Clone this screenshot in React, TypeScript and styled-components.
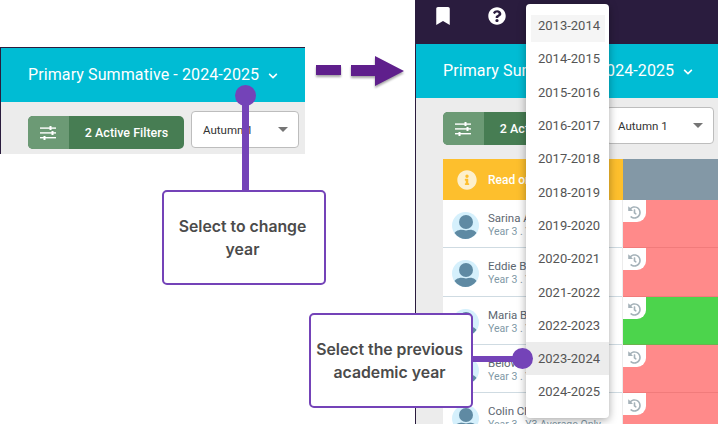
import React from 'react';
import styled, { createGlobalStyle } from 'styled-components';
import { FaBookmark, FaQuestionCircle, FaInfoCircle, FaHistory, FaChevronDown } from 'react-icons/fa';

const GlobalStyle = createGlobalStyle`
    html, body {
        margin: 0;
        padding: 0;
        background: #fff;
    }
    body {
        font-family: Roboto, "Liberation Sans", sans-serif;
    }
`;

const PURPLE = '#7443b8';

const Canvas = styled.div`
    position: relative;
    display: flex;
    width: 718px;
    height: 424px;
    overflow: hidden;
    background: #fff;
`;

const LeftColumn = styled.div`
    width: 415px;
    flex: none;
    padding-top: 47px;
    box-sizing: border-box;
`;

const LeftShot = styled.div`
    width: 305px;
    box-sizing: border-box;
    border-top: 1px solid #2a1c3e;
    border-left: 1px solid #2a1c3e;
`;

const RightShot = styled.div`
    flex: 1;
    min-width: 0;
    height: 424px;
    border-left: 1px solid #2a1c3e;
    background: #ececec;
`;

const NavBar = styled.div`
    height: 44px;
    background: #2a1c3e;
    display: flex;
    align-items: flex-start;
    color: #fff;
    padding: 7px 0 0 18px;
    box-sizing: border-box;
    gap: 36px;
`;

const TitleBar = styled.div`
    height: 54px;
    background: #00bcd4;
    display: flex;
    align-items: center;
    padding-left: 27px;
    color: #fff;
    font-size: 16px;
    letter-spacing: 0.1px;
    white-space: nowrap;
    padding-bottom: 2px;
    box-sizing: border-box;
`;

const Chevron = styled(FaChevronDown)`
    width: 10px;
    height: 10px;
    margin-left: 9px;
    margin-top: 3px;
`;

const FilterBar = styled.div`
    height: 52px;
    background: #ececec;
    display: flex;
    align-items: flex-start;
    gap: 7px;
    padding-left: 27px;
    box-sizing: border-box;
`;

const FilterButton = styled.div`
    margin-top: 14px;
    width: 156px;
    height: 33px;
    display: flex;
    flex: none;
    border-radius: 5px;
    overflow: hidden;
    background: #477d53;
    color: #fff;
    font-size: 12.5px;
    font-weight: 500;
`;

const FilterIcon = styled.div`
    width: 41px;
    background: #6c9a75;
    display: flex;
    align-items: center;
    justify-content: center;
`;

const FilterLabel = styled.div`
    flex: 1;
    display: flex;
    align-items: center;
    justify-content: center;
    white-space: nowrap;
`;

const SelectBox = styled.div`
    margin-top: 9px;
    width: 108px;
    height: 37px;
    flex: none;
    background: #fff;
    border: 1px solid #bdbdbd;
    border-radius: 4px;
    box-sizing: border-box;
    display: flex;
    align-items: center;
    justify-content: space-between;
    padding: 0 10px 0 11px;
    font-size: 11.5px;
    color: #333;
`;

const Caret = styled.div`
    width: 0;
    height: 0;
    border-left: 5px solid transparent;
    border-right: 5px solid transparent;
    border-top: 5px solid #757575;
`;

const Table = styled.div`
    margin: 9px 0 0 27px;
`;

const TableHead = styled.div`
    display: flex;
    height: 41px;
`;

const ReadOnly = styled.div`
    width: 180px;
    background: #fdbf2d;
    display: flex;
    align-items: center;
    gap: 11px;
    padding-left: 14px;
    box-sizing: border-box;
    color: #fff;
    font-size: 12px;
    font-weight: 500;
    svg {
        width: 20px;
        height: 20px;
        color: #fdf0cc;
    }
`;

const HeadFill = styled.div`
    flex: 1;
    background: #8398a6;
`;

const Row = styled.div`
    display: flex;
    height: 48.25px;
`;

const PupilCell = styled.div`
    width: 179px;
    flex: none;
    box-sizing: border-box;
    background: #fff;
    border-bottom: 1px solid #cfdbe2;
    display: flex;
    align-items: flex-start;
    padding: 10px 0 0 9px;
    gap: 9px;
    margin-right: 1px;
`;

const AvatarGlyph = styled.svg`
    flex: none;
    margin-top: 2px;
`;

const PupilText = styled.div`
    white-space: nowrap;
    padding-top: 1px;
`;

const PupilName = styled.div`
    font-size: 11.5px;
    line-height: 14px;
    color: #5c6670;
`;

const PupilMeta = styled.div`
    font-size: 10.5px;
    line-height: 14px;
    color: #7f98a6;
`;

const GradeCell = styled.div<{ $color: string }>`
    flex: 1;
    background: ${(p) => p.$color};
    border-bottom: 1px solid rgba(200, 80, 80, 0.25);
    box-sizing: border-box;
`;

const HistoryTab = styled.div`
    width: 23px;
    height: 22px;
    background: #fff;
    border-bottom-right-radius: 9px;
    display: flex;
    align-items: center;
    justify-content: center;
    color: #a5b2b9;
    svg {
        width: 13px;
        height: 13px;
        margin-top: 3px;
    }
`;

const YearMenu = styled.div`
    position: absolute;
    left: 526px;
    top: 4px;
    width: 83px;
    height: 414px;
    padding-top: 5px;
    box-sizing: border-box;
    background: #fff;
    border-radius: 4px;
    box-shadow: 0 2px 8px rgba(0, 0, 0, 0.35);
    display: flex;
    flex-direction: column;
`;

const YearItem = styled.div<{ $state?: 'first' | 'active' }>`
    height: 33.3px;
    flex: none;
    display: flex;
    align-items: center;
    padding-left: 12px;
    font-size: 13px;
    color: #555;
    background: ${(p) =>
        p.$state === 'active'
            ? '#ececec'
            : p.$state === 'first'
              ? 'linear-gradient(#f5f5f5, #f5f5f5) no-repeat 5px 6px / 74px 28px'
              : 'none'};
`;

const Arrow = styled.svg`
    position: absolute;
    left: 314px;
    top: 54px;
    filter: drop-shadow(0 2px 1px rgba(0, 0, 0, 0.35));
`;

const Callout = styled.div<{ $x: number; $y: number }>`
    position: absolute;
    left: ${(p) => p.$x}px;
    top: ${(p) => p.$y}px;
    width: 164px;
    height: 95px;
    padding: 0 4px 0 1px;
    box-sizing: border-box;
    background: #fff;
    border: 2px solid ${PURPLE};
    border-radius: 5px;
    display: flex;
    align-items: center;
    justify-content: center;
    text-align: center;
    font-family: Inter, "Liberation Sans", sans-serif;
    font-size: 15.8px;
    font-weight: 600;
    line-height: 23px;
    color: #4b4b4b;
`;

const Connector = styled.div<{ $x: number; $y: number; $w: number; $h: number }>`
    position: absolute;
    left: ${(p) => p.$x}px;
    top: ${(p) => p.$y}px;
    width: ${(p) => p.$w}px;
    height: ${(p) => p.$h}px;
    background: ${PURPLE};
`;

const Dot = styled.div<{ $x: number; $y: number }>`
    position: absolute;
    left: ${(p) => p.$x - 10.5}px;
    top: ${(p) => p.$y - 10.5}px;
    width: 21px;
    height: 21px;
    border-radius: 50%;
    background: ${PURPLE};
`;

function SlidersGlyph() {
    return (
        <svg width="17" height="14" viewBox="0 0 17 14" fill="#fff">
            <rect x="0" y="1.4" width="16" height="1.4" />
            <rect x="0" y="6.2" width="16" height="1.4" />
            <rect x="0" y="11" width="16" height="1.4" />
            <rect x="9.5" y="0" width="2" height="4" />
            <rect x="11.5" y="5" width="2" height="4" />
            <rect x="3.5" y="10" width="2" height="4" />
        </svg>
    );
}

function Avatar() {
    return (
        <AvatarGlyph width="27" height="27" viewBox="0 0 27 27">
            <circle cx="13.5" cy="13.5" r="13.5" fill="#d5f0fc" />
            <path d="M2.5 21 C4.5 18 8 17.5 14 17.5 C20 17.5 22.5 18 24.5 21 C21.5 25 17.5 27 13.5 27 C9.5 27 5.5 25 2.5 21 Z" fill="#5f8aa3" />
            <circle cx="14" cy="10" r="8.5" fill="#d5f0fc" />
            <circle cx="14" cy="10" r="7" fill="#5f8aa3" />
        </AvatarGlyph>
    );
}

const years = [
    '2013-2014', '2014-2015', '2015-2016', '2016-2017', '2017-2018', '2018-2019',
    '2019-2020', '2020-2021', '2021-2022', '2022-2023', '2023-2024', '2024-2025',
];

const RED = '#ff8a8a';
const GREEN = '#4cd44c';

const pupils = [
    { name: 'Sarina Adams', meta: 'Year 3 . Y3 Average', color: RED },
    { name: 'Eddie Baker', meta: 'Year 3 . Y3 Average', color: RED },
    { name: 'Maria Bell', meta: 'Year 3 . Y3 Average', color: GREEN },
    { name: 'Below Clark', meta: 'Year 3 . Y3 Average', color: RED },
    { name: 'Colin Chapman', meta: 'Year 3 . Y3 Average Only', color: RED },
];

function Header() {
    return (
        <>
            <TitleBar>
                Primary Summative - 2024-2025
                <Chevron />
            </TitleBar>
            <FilterBar>
                <FilterButton>
                    <FilterIcon><SlidersGlyph /></FilterIcon>
                    <FilterLabel>2 Active Filters</FilterLabel>
                </FilterButton>
                <SelectBox>
                    Autumn 1
                    <Caret />
                </SelectBox>
            </FilterBar>
        </>
    );
}

export default function App() {
    return (
        <>
            <GlobalStyle />
            <Canvas>
                <LeftColumn>
                    <LeftShot>
                        <Header />
                    </LeftShot>
                </LeftColumn>

                <RightShot>
                    <NavBar>
                        <FaBookmark size={18} />
                        <FaQuestionCircle size={18} />
                    </NavBar>
                    <Header />
                    <Table>
                        <TableHead>
                            <ReadOnly>
                                <FaInfoCircle />
                                Read only
                            </ReadOnly>
                            <HeadFill />
                        </TableHead>
                        {pupils.map((pupil) => (
                            <Row key={pupil.name}>
                                <PupilCell>
                                    <Avatar />
                                    <PupilText>
                                        <PupilName>{pupil.name}</PupilName>
                                        <PupilMeta>{pupil.meta}</PupilMeta>
                                    </PupilText>
                                </PupilCell>
                                <GradeCell $color={pupil.color}>
                                    <HistoryTab><FaHistory /></HistoryTab>
                                </GradeCell>
                            </Row>
                        ))}
                    </Table>
                </RightShot>

                <YearMenu>
                    {years.map((year, i) => (
                        <YearItem key={year} $state={i === 0 ? 'first' : i === 10 ? 'active' : undefined}>
                            {year}
                        </YearItem>
                    ))}
                </YearMenu>

                <Arrow width="92" height="36" viewBox="0 0 92 36">
                    <rect x="2" y="11" width="25" height="10" fill="#5f1f8c" />
                    <path d="M37 11 H61 V2 L90 17 L61 32 V22 H37 Z" fill="#5f1f8c" />
                </Arrow>

                <Connector $x={242} $y={100} $w={7} $h={92} />
                <Dot $x={245} $y={95.5} />
                <Callout $x={162} $y={190}>Select to change year</Callout>

                <Connector $x={470} $y={356} $w={50} $h={6} />
                <Dot $x={522.5} $y={358} />
                <Callout $x={309} $y={313}>Select the previous academic year</Callout>
            </Canvas>
        </>
    );
}
